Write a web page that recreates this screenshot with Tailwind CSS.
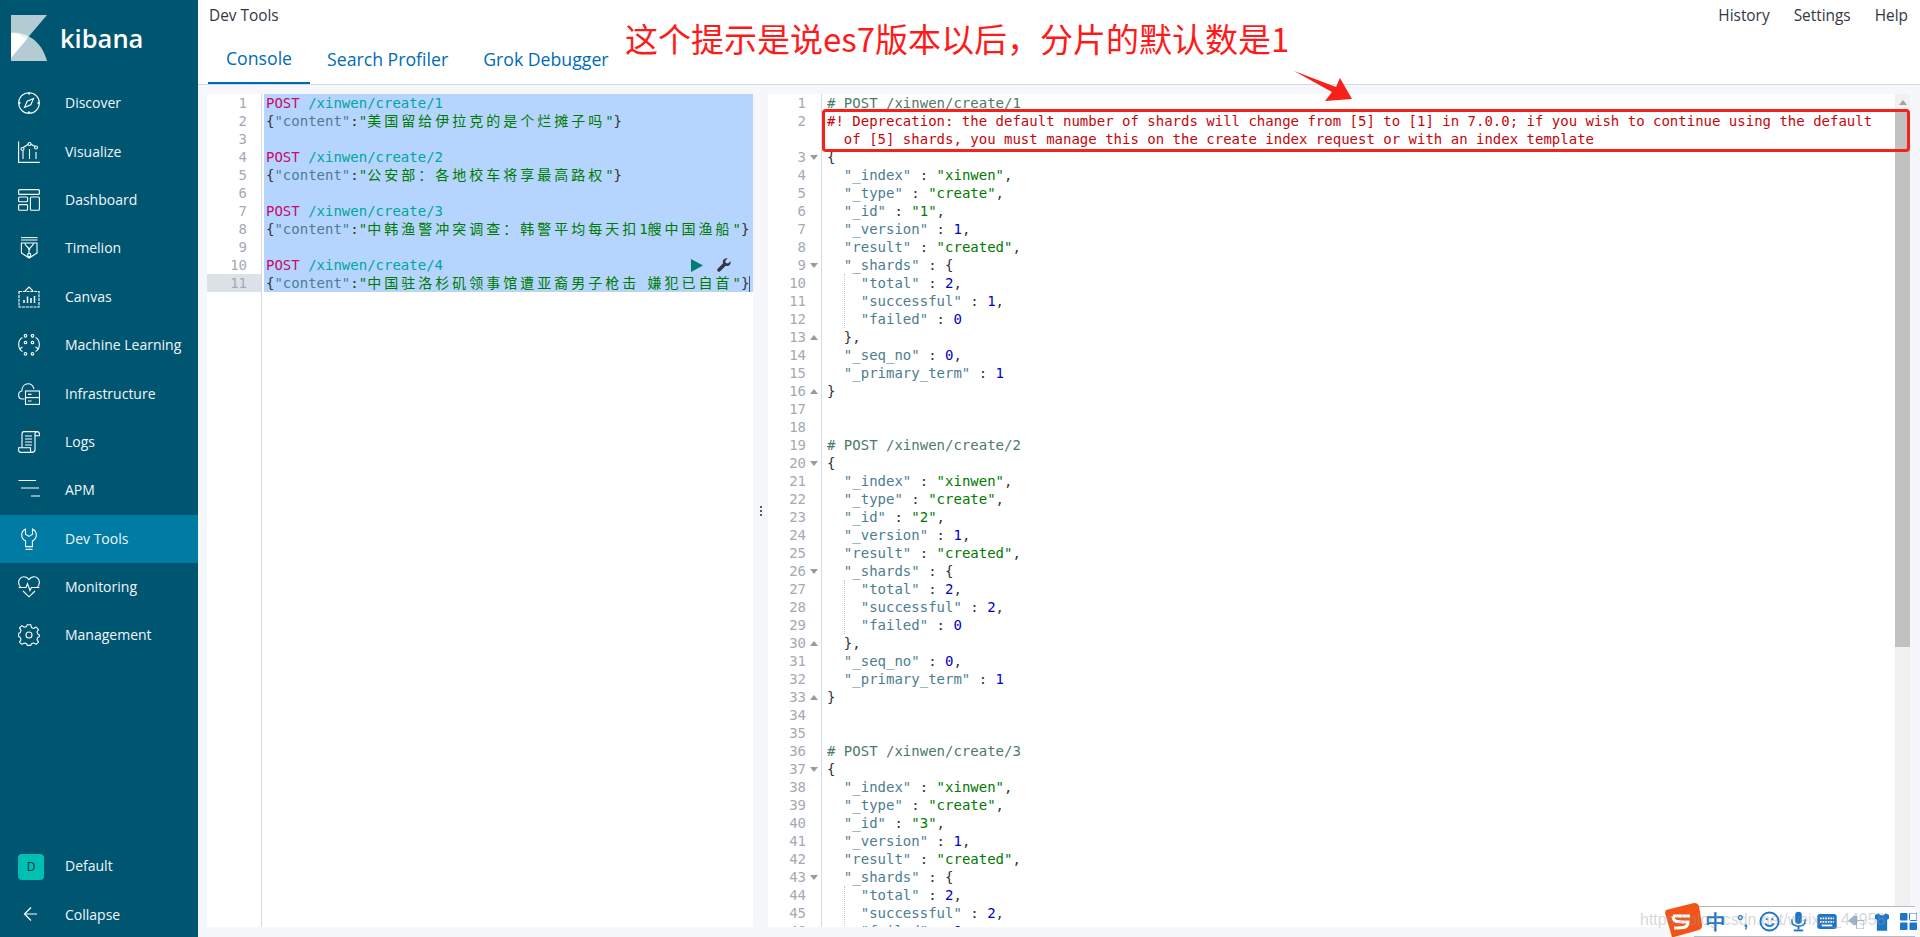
<!DOCTYPE html>
<html lang="zh">
<head>
<meta charset="utf-8">
<title>Dev Tools - Kibana</title>
<script src="https://cdn.jsdelivr.net/npm/@tailwindcss/browser@4"></script>
</head>
<body class="overflow-hidden">
<div class="relative flex h-[937px] w-[1920px] overflow-hidden bg-[#f5f7fa] font-['Open_Sans',sans-serif]">

  <!-- sidebar -->
  <aside class="flex w-[198px] shrink-0 flex-col bg-[#005571] text-[14px] text-[#f0f7fa]">
    <div class="flex h-[79px] items-start pl-[11px] pt-[15px]">
      <svg width="36" height="46" viewBox="0 0 36 46" class="shrink-0">
        <path d="M0 0H36L13 27C10 21 6 18 0 17.5Z" fill="#fff" fill-opacity=".7"/>
        <path d="M0 17.5C14 17 30 24 36 46H0Z" fill="#fff" fill-opacity=".7"/>
        <path d="M0 17.5C6 18 10 21 16 24L0 43Z" fill="#fff"/>
      </svg>
      <span class="ml-[13px] mt-[3px] text-[25.5px] font-semibold leading-[40px] text-white">kibana</span>
    </div>

    <nav class="flex flex-col">
      <a class="flex h-[48.4px] items-center gap-[25px] pl-[18px]">
        <svg class="h-[22px] w-[22px] shrink-0" viewBox="0 0 22 22" fill="none" stroke="#fff" stroke-width="1.1"><circle cx="11" cy="11" r="10.3"/><path d="M15.5 6.5L12.8 12.8L6.5 15.5L9.2 9.2Z"/><path d="M11 .7V2.4M11 19.6V21.3M.7 11H2.4M19.6 11H21.3" stroke-width="2"/></svg>
        <span class="pb-[1px]">Discover</span>
      </a>
      <a class="flex h-[48.4px] items-center gap-[25px] pl-[18px]">
        <svg class="h-[22px] w-[22px] shrink-0" viewBox="0 0 22 22" fill="none" stroke="#fff" stroke-width="1.1"><path d="M.6 .5V21.4H21.8"/><path d="M5 18V10M11.5 18V8M18 18V11"/><path d="M4.5 7L11.5 2.5L18 6"/><circle cx="4.5" cy="8" r="1.5" fill="#005571"/><circle cx="11.5" cy="3" r="1.5" fill="#005571"/><circle cx="18" cy="6.5" r="1.5" fill="#005571"/></svg>
        <span class="pb-[1px]">Visualize</span>
      </a>
      <a class="flex h-[48.4px] items-center gap-[25px] pl-[18px]">
        <svg class="h-[22px] w-[22px] shrink-0" viewBox="0 0 22 22" fill="none" stroke="#fff" stroke-width="1.1"><rect x=".6" y=".6" width="20.8" height="4.8" rx="1"/><rect x=".6" y="8" width="9" height="4.8" rx="1"/><rect x=".6" y="15.6" width="9" height="5.6" rx="1"/><rect x="12.4" y="8" width="9" height="13.2" rx="1"/></svg>
        <span class="pb-[1px]">Dashboard</span>
      </a>
      <a class="flex h-[48.4px] items-center gap-[25px] pl-[18px]">
        <svg class="h-[22px] w-[22px] shrink-0" viewBox="0 0 22 22" fill="none" stroke="#fff" stroke-width="1.1"><path d="M3 .6H19.5M3 3H19.5" stroke-width="1"/><path d="M3.4 6H19V16L11.2 21L3.4 16Z"/><path d="M7 6C7 10 11 9 11 13V16.5M15.5 6C15.5 10 11.4 9 11.4 13" /><circle cx="11.2" cy="18" r="1.6"/></svg>
        <span class="pb-[1px]">Timelion</span>
      </a>
      <a class="flex h-[48.4px] items-center gap-[25px] pl-[18px]">
        <svg class="h-[22px] w-[22px] shrink-0" viewBox="0 0 22 22" fill="none" stroke="#fff" stroke-width="1.1"><path d="M1 5.5H21V21H1Z" stroke-dasharray="3 .8"/><path d="M7 5L11 1L15 5"/><path d="M6 17V14M9.5 17V10.5M13 17V12M16.5 17V10" stroke-width="1.5"/></svg>
        <span class="pb-[1px]">Canvas</span>
      </a>
      <a class="flex h-[48.4px] items-center gap-[25px] pl-[18px]">
        <svg class="h-[22px] w-[22px] shrink-0" viewBox="0 0 22 22" fill="none" stroke="#fff" stroke-width="1.1"><circle cx="7.5" cy="1.8" r="1.3"/><circle cx="14.5" cy="1.8" r="1.3"/><circle cx="7.5" cy="8.5" r="1.3"/><circle cx="14.5" cy="8.5" r="1.3"/><circle cx="7.5" cy="19.8" r="1.3"/><circle cx="14.5" cy="19.8" r="1.3"/><path d="M4.5 3.5C1.5 5 .6 8 .7 11C.8 14 1.5 16 4.5 17.5M17.5 3.5C20.5 5 21.4 8 21.3 11C21.2 14 20.5 16 17.5 17.5"/><path d="M4.5 13L1.5 15M17.5 13L20.5 15" /></svg>
        <span class="pb-[1px]">Machine Learning</span>
      </a>
      <a class="flex h-[48.4px] items-center gap-[25px] pl-[18px]">
        <svg class="h-[22px] w-[22px] shrink-0" viewBox="0 0 22 22" fill="none" stroke="#fff" stroke-width="1.1"><path d="M6.5 16H4.5C2 16 .6 14 .6 12C.6 9.8 2 8.3 3.8 8C4 3.8 6.5 .8 10 .8C13 .8 15.3 3 16 6"/><rect x="7.5" y="8" width="14" height="13.4"/><path d="M7.5 14.6H21.5"/><path d="M10 11.4H13.5M10 18H13.5"/></svg>
        <span class="pb-[1px]">Infrastructure</span>
      </a>
      <a class="flex h-[48.4px] items-center gap-[25px] pl-[18px]">
        <svg class="h-[22px] w-[22px] shrink-0" viewBox="0 0 22 22" fill="none" stroke="#fff" stroke-width="1.1"><path d="M19 .6H6C4.5 .6 4 1.8 4 3V16.5"/><path d="M19 .6C20.5 .6 21.4 1.5 21.4 3V4.8H17V3C17 1.5 17.5 .6 19 .6Z"/><path d="M17 4.8V18.5C17 20.5 16 21.4 14 21.4H3C1.5 21.4 .6 20.5 .6 19V16.8H12.5V19C12.5 20.5 13 21.4 14 21.4"/><path d="M7 5H14M7 8H14M7 11H14M7 14H14"/></svg>
        <span class="pb-[1px]">Logs</span>
      </a>
      <a class="flex h-[48.4px] items-center gap-[25px] pl-[18px]">
        <svg class="h-[22px] w-[22px] shrink-0" viewBox="0 0 22 22" fill="none" stroke="#fff" stroke-width="1.2"><path d="M.5 1.5H18M3 9H21M13 17H22"/></svg>
        <span class="pb-[1px]">APM</span>
      </a>
      <a class="flex h-[48.4px] items-center gap-[25px] bg-[#007ba4] pl-[18px]">
        <svg class="h-[22px] w-[22px] shrink-0" viewBox="0 0 22 22" fill="none" stroke="#fff" stroke-width="1.1"><path d="M7.5 1C5 2.2 3.7 4.5 3.7 7C3.7 9.6 5.2 11.7 7.6 12.9V18.6H14.4V12.9C16.8 11.7 18.3 9.6 18.3 7C18.3 4.5 17 2.2 14.5 1V6.2L11 8.4L7.5 6.2Z"/><path d="M7.5 21.3H14.5"/></svg>
        <span class="pb-[1px]">Dev Tools</span>
      </a>
      <a class="flex h-[48.4px] items-center gap-[25px] pl-[18px]">
        <svg class="h-[22px] w-[22px] shrink-0" viewBox="0 0 22 22" fill="none" stroke="#fff" stroke-width="1.1"><path d="M2.5 11C1.2 9.6 .6 8 .6 6.5C.6 3.2 3 .8 6 .8C8 .8 9.8 1.8 11 3.6C12.2 1.8 14 .8 16 .8C19 .8 21.4 3.2 21.4 6.5C21.4 8 20.8 9.6 19.5 11"/><path d="M.6 11.5H8L9.5 7.5L12 14.5L13.5 11.5H21.4"/><path d="M5 15L11 20.8L17 15"/></svg>
        <span class="pb-[1px]">Monitoring</span>
      </a>
      <a class="flex h-[48.4px] items-center gap-[25px] pl-[18px]">
        <svg class="h-[22px] w-[22px] shrink-0" viewBox="0 0 22 22" fill="none" stroke="#fff" stroke-width="1.1"><circle cx="11" cy="11" r="3"/><path d="M9.2 .7H12.8L13.4 3.5L15.6 4.5L18.1 3L20.5 5.6L19 8L19.8 10L21.4 11V12.6L19.8 13.4L19 15.6L20.5 18.1L18.1 20.3L15.6 19L13.4 19.8L12.8 21.4H9.2L8.6 19.8L6.4 19L3.9 20.3L1.5 18.1L3 15.6L2.2 13.4L.6 12.6V9.4L2.2 8.6L3 6.4L1.5 3.9L3.9 1.7L6.4 3.2L8.6 2.4Z" stroke-linejoin="round"/></svg>
        <span class="pb-[1px]">Management</span>
      </a>
    </nav>

    <div class="mt-auto flex flex-col">
      <a class="flex h-[48px] items-center gap-[21px] pl-[18px]">
        <span class="flex h-[26px] w-[26px] shrink-0 items-center justify-center rounded-[4px] bg-[#00bfb3] text-[12px] text-[#003b36]">D</span>
        <span class="pb-[3px]">Default</span>
      </a>
      <a class="flex h-[46px] items-center gap-[25px] pl-[18px]">
        <svg class="h-[22px] w-[22px] shrink-0" viewBox="0 0 22 22" fill="none" stroke="#fff" stroke-width="1.2"><path d="M19 11H6.5M13 4.5L6.5 11L13 17.5"/></svg>
        <span>Collapse</span>
      </a>
    </div>
  </aside>

  <!-- main -->
  <main class="flex min-w-0 flex-1 flex-col">
    <header class="h-[85px] shrink-0 border-b border-[#d3dae6] bg-white text-[#343741]">
      <div class="flex h-[32px] items-center justify-between pl-[11px] pr-[12px] text-[15.4px]">
        <span>Dev Tools</span>
        <div class="flex gap-[24px]">
          <span>History</span>
          <span>Settings</span>
          <span>Help</span>
        </div>
      </div>
      <div class="ml-[10px] flex h-[52px] items-stretch whitespace-nowrap text-[17.7px] text-[#006bb4]">
        <span class="flex w-[102px] items-center justify-center border-b-2 border-[#006bb4] pt-[3px]">Console</span>
        <span class="flex items-center pl-[17px] pr-[17px] pt-[3px]">Search Profiler</span>
        <span class="flex items-center px-[18px] pt-[3px]">Grok Debugger</span>
      </div>
    </header>

    <div class="flex min-h-0 flex-1 pb-[10px] pl-[9px] pr-[10px] pt-[9px] font-['DejaVu_Sans_Mono','Noto_Sans_CJK_SC',monospace] text-[14px] leading-[18px]">

      <!-- request editor -->
      <section class="flex w-[546px] shrink-0 bg-white">
        <div class="w-[55px] shrink-0 border-r border-[#d3dae6] text-right text-[#a4a9b5]">
          <div class="pr-[14px]">1</div>
          <div class="pr-[14px]">2</div>
          <div class="pr-[14px]">3</div>
          <div class="pr-[14px]">4</div>
          <div class="pr-[14px]">5</div>
          <div class="pr-[14px]">6</div>
          <div class="pr-[14px]">7</div>
          <div class="pr-[14px]">8</div>
          <div class="pr-[14px]">9</div>
          <div class="pr-[14px]">10</div>
          <div class="bg-[#dde1e8] pr-[14px]">11</div>
        </div>
        <div class="ml-[2px] h-[198px] flex-1 overflow-hidden bg-[#b5d5ff] pl-[2px] text-[#333] *:whitespace-pre">
          <div><span class="text-[#c80a68]">POST</span> <span class="text-[#00a69b]">/xinwen/create/1</span></div>
          <div>{<span class="text-[#4d7d8f]">"content"</span>:<span class="text-[#007a00]">"<span class="tracking-[3px]">美国留给伊拉克的是个烂摊子吗</span>"</span>}</div>
          <div>&nbsp;</div>
          <div><span class="text-[#c80a68]">POST</span> <span class="text-[#00a69b]">/xinwen/create/2</span></div>
          <div>{<span class="text-[#4d7d8f]">"content"</span>:<span class="text-[#007a00]">"<span class="tracking-[3px]">公安部：各地校车将享最高路权</span>"</span>}</div>
          <div>&nbsp;</div>
          <div><span class="text-[#c80a68]">POST</span> <span class="text-[#00a69b]">/xinwen/create/3</span></div>
          <div>{<span class="text-[#4d7d8f]">"content"</span>:<span class="text-[#007a00]">"<span class="tracking-[3px]">中韩渔警冲突调查：韩警平均每天扣</span>1<span class="tracking-[3px]">艘中国渔船</span>"</span>}</div>
          <div>&nbsp;</div>
          <div class="relative"><span class="text-[#c80a68]">POST</span> <span class="text-[#00a69b]">/xinwen/create/4</span><svg class="absolute left-[425px] top-[3px] h-[13px] w-[12px]" viewBox="0 0 12 13"><path d="M0 0L12 6.5L0 13Z" fill="#017d73"/></svg><svg class="absolute left-[451px] top-[2px] h-[14px] w-[14px]" viewBox="0 0 14 14"><path d="M13.5 3.2L11 5.6L8.8 5L8.2 2.8L10.6 .4C8.6 -.2 6.6 .8 6 2.6C5.7 3.5 5.8 4.4 6.1 5.2L.7 10.7C0 11.4 0 12.5 .7 13.2C1.4 13.9 2.5 13.9 3.2 13.2L8.7 7.8C10.6 8.5 12.7 7.6 13.4 5.7C13.7 4.9 13.8 4 13.5 3.2Z" fill="#343741"/></svg></div>
          <div>{<span class="text-[#4d7d8f]">"content"</span>:<span class="text-[#007a00]">"<span class="tracking-[3px]">中国驻洛杉矶领事馆遭亚裔男子枪击</span> <span class="tracking-[3px]">嫌犯已自首</span>"</span>}<span class="inline-block h-[16px] w-px bg-[#555] align-middle"></span></div>
        </div>
      </section>

      <!-- resize handle -->
      <div class="flex w-[15px] shrink-0 flex-col items-center justify-center gap-[2px]">
        <span class="h-[2px] w-[2px] bg-[#535966]"></span>
        <span class="h-[2px] w-[2px] bg-[#535966]"></span>
        <span class="h-[2px] w-[2px] bg-[#535966]"></span>
      </div>

      <!-- response editor -->
      <section class="flex min-w-0 flex-1 overflow-hidden bg-white">
        <div class="h-[833px] w-[54px] shrink-0 overflow-hidden border-r border-[#d3dae6] text-right text-[#a4a9b5]">
          <div class="pr-[15px]">1</div>
          <div class="h-[36px] pr-[15px]">2</div>
          <div class="relative pr-[15px]">3<span class="absolute right-[3px] top-[7px] h-0 w-0 border-x-[4px] border-t-[5px] border-x-transparent border-t-[#9a9a9a]"></span></div>
          <div class="pr-[15px]">4</div>
          <div class="pr-[15px]">5</div>
          <div class="pr-[15px]">6</div>
          <div class="pr-[15px]">7</div>
          <div class="pr-[15px]">8</div>
          <div class="relative pr-[15px]">9<span class="absolute right-[3px] top-[7px] h-0 w-0 border-x-[4px] border-t-[5px] border-x-transparent border-t-[#9a9a9a]"></span></div>
          <div class="pr-[15px]">10</div>
          <div class="pr-[15px]">11</div>
          <div class="pr-[15px]">12</div>
          <div class="relative pr-[15px]">13<span class="absolute right-[3px] top-[7px] h-0 w-0 border-x-[4px] border-b-[5px] border-x-transparent border-b-[#9a9a9a]"></span></div>
          <div class="pr-[15px]">14</div>
          <div class="pr-[15px]">15</div>
          <div class="relative pr-[15px]">16<span class="absolute right-[3px] top-[7px] h-0 w-0 border-x-[4px] border-b-[5px] border-x-transparent border-b-[#9a9a9a]"></span></div>
          <div class="pr-[15px]">17</div>
          <div class="pr-[15px]">18</div>
          <div class="pr-[15px]">19</div>
          <div class="relative pr-[15px]">20<span class="absolute right-[3px] top-[7px] h-0 w-0 border-x-[4px] border-t-[5px] border-x-transparent border-t-[#9a9a9a]"></span></div>
          <div class="pr-[15px]">21</div>
          <div class="pr-[15px]">22</div>
          <div class="pr-[15px]">23</div>
          <div class="pr-[15px]">24</div>
          <div class="pr-[15px]">25</div>
          <div class="relative pr-[15px]">26<span class="absolute right-[3px] top-[7px] h-0 w-0 border-x-[4px] border-t-[5px] border-x-transparent border-t-[#9a9a9a]"></span></div>
          <div class="pr-[15px]">27</div>
          <div class="pr-[15px]">28</div>
          <div class="pr-[15px]">29</div>
          <div class="relative pr-[15px]">30<span class="absolute right-[3px] top-[7px] h-0 w-0 border-x-[4px] border-b-[5px] border-x-transparent border-b-[#9a9a9a]"></span></div>
          <div class="pr-[15px]">31</div>
          <div class="pr-[15px]">32</div>
          <div class="relative pr-[15px]">33<span class="absolute right-[3px] top-[7px] h-0 w-0 border-x-[4px] border-b-[5px] border-x-transparent border-b-[#9a9a9a]"></span></div>
          <div class="pr-[15px]">34</div>
          <div class="pr-[15px]">35</div>
          <div class="pr-[15px]">36</div>
          <div class="relative pr-[15px]">37<span class="absolute right-[3px] top-[7px] h-0 w-0 border-x-[4px] border-t-[5px] border-x-transparent border-t-[#9a9a9a]"></span></div>
          <div class="pr-[15px]">38</div>
          <div class="pr-[15px]">39</div>
          <div class="pr-[15px]">40</div>
          <div class="pr-[15px]">41</div>
          <div class="pr-[15px]">42</div>
          <div class="relative pr-[15px]">43<span class="absolute right-[3px] top-[7px] h-0 w-0 border-x-[4px] border-t-[5px] border-x-transparent border-t-[#9a9a9a]"></span></div>
          <div class="pr-[15px]">44</div>
          <div class="pr-[15px]">45</div>
          <div class="pr-[15px]">46</div>
        </div>
        <div class="ml-[5px] h-[833px] min-w-0 flex-1 overflow-hidden text-[#333] *:whitespace-pre">
          <div class="text-[#4d7a6a]"># POST /xinwen/create/1</div>
          <div class="text-[#c5060b]">#! Deprecation: the default number of shards will change from [5] to [1] in 7.0.0; if you wish to continue using the default</div>
          <div class="text-[#c5060b]">  of [5] shards, you must manage this on the create index request or with an index template</div>
          <div>{</div>
          <div>  <span class="text-[#4d7d8f]">"_index"</span> : <span class="text-[#007a00]">"xinwen"</span>,</div>
          <div>  <span class="text-[#4d7d8f]">"_type"</span> : <span class="text-[#007a00]">"create"</span>,</div>
          <div>  <span class="text-[#4d7d8f]">"_id"</span> : <span class="text-[#007a00]">"1"</span>,</div>
          <div>  <span class="text-[#4d7d8f]">"_version"</span> : <span class="text-[#0000cd]">1</span>,</div>
          <div>  <span class="text-[#4d7d8f]">"result"</span> : <span class="text-[#007a00]">"created"</span>,</div>
          <div>  <span class="text-[#4d7d8f]">"_shards"</span> : {</div>
          <div class="ml-[16.86px] border-l border-dotted border-[#c8c8c8] pl-[15.86px] whitespace-normal! *:whitespace-pre">
            <div><span class="text-[#4d7d8f]">"total"</span> : <span class="text-[#0000cd]">2</span>,</div>
            <div><span class="text-[#4d7d8f]">"successful"</span> : <span class="text-[#0000cd]">1</span>,</div>
            <div><span class="text-[#4d7d8f]">"failed"</span> : <span class="text-[#0000cd]">0</span></div>
          </div>
          <div>  },</div>
          <div>  <span class="text-[#4d7d8f]">"_seq_no"</span> : <span class="text-[#0000cd]">0</span>,</div>
          <div>  <span class="text-[#4d7d8f]">"_primary_term"</span> : <span class="text-[#0000cd]">1</span></div>
          <div>}</div>
          <div>&nbsp;</div>
          <div>&nbsp;</div>
          <div class="text-[#4d7a6a]"># POST /xinwen/create/2</div>
          <div>{</div>
          <div>  <span class="text-[#4d7d8f]">"_index"</span> : <span class="text-[#007a00]">"xinwen"</span>,</div>
          <div>  <span class="text-[#4d7d8f]">"_type"</span> : <span class="text-[#007a00]">"create"</span>,</div>
          <div>  <span class="text-[#4d7d8f]">"_id"</span> : <span class="text-[#007a00]">"2"</span>,</div>
          <div>  <span class="text-[#4d7d8f]">"_version"</span> : <span class="text-[#0000cd]">1</span>,</div>
          <div>  <span class="text-[#4d7d8f]">"result"</span> : <span class="text-[#007a00]">"created"</span>,</div>
          <div>  <span class="text-[#4d7d8f]">"_shards"</span> : {</div>
          <div class="ml-[16.86px] border-l border-dotted border-[#c8c8c8] pl-[15.86px] whitespace-normal! *:whitespace-pre">
            <div><span class="text-[#4d7d8f]">"total"</span> : <span class="text-[#0000cd]">2</span>,</div>
            <div><span class="text-[#4d7d8f]">"successful"</span> : <span class="text-[#0000cd]">2</span>,</div>
            <div><span class="text-[#4d7d8f]">"failed"</span> : <span class="text-[#0000cd]">0</span></div>
          </div>
          <div>  },</div>
          <div>  <span class="text-[#4d7d8f]">"_seq_no"</span> : <span class="text-[#0000cd]">0</span>,</div>
          <div>  <span class="text-[#4d7d8f]">"_primary_term"</span> : <span class="text-[#0000cd]">1</span></div>
          <div>}</div>
          <div>&nbsp;</div>
          <div>&nbsp;</div>
          <div class="text-[#4d7a6a]"># POST /xinwen/create/3</div>
          <div>{</div>
          <div>  <span class="text-[#4d7d8f]">"_index"</span> : <span class="text-[#007a00]">"xinwen"</span>,</div>
          <div>  <span class="text-[#4d7d8f]">"_type"</span> : <span class="text-[#007a00]">"create"</span>,</div>
          <div>  <span class="text-[#4d7d8f]">"_id"</span> : <span class="text-[#007a00]">"3"</span>,</div>
          <div>  <span class="text-[#4d7d8f]">"_version"</span> : <span class="text-[#0000cd]">1</span>,</div>
          <div>  <span class="text-[#4d7d8f]">"result"</span> : <span class="text-[#007a00]">"created"</span>,</div>
          <div>  <span class="text-[#4d7d8f]">"_shards"</span> : {</div>
          <div class="ml-[16.86px] border-l border-dotted border-[#c8c8c8] pl-[15.86px] whitespace-normal! *:whitespace-pre">
            <div><span class="text-[#4d7d8f]">"total"</span> : <span class="text-[#0000cd]">2</span>,</div>
            <div><span class="text-[#4d7d8f]">"successful"</span> : <span class="text-[#0000cd]">2</span>,</div>
            <div><span class="text-[#4d7d8f]">"failed"</span> : <span class="text-[#0000cd]">0</span></div>
          </div>
        </div>
        <div class="w-[15px] shrink-0 bg-[#f1f1f1]">
          <div class="flex h-[17px] items-center justify-center"><span class="h-0 w-0 border-x-[4px] border-b-[5px] border-x-transparent border-b-[#a3a3a3]"></span></div>
          <div class="h-[536px] bg-[#c1c1c1]"></div>
        </div>
      </section>
    </div>
  </main>

  <!-- annotation -->
  <div class="absolute left-[625px] top-[16px] whitespace-nowrap font-['Noto_Sans_CJK_SC',sans-serif] text-[33px] leading-[44px] text-[#ff1a1a]">这个提示是说es7版本以后，分片的默认数是1</div>
  <svg class="absolute left-[1292px] top-[68px]" width="62" height="34" viewBox="0 0 62 34"><path d="M2 3L44 19L48 10L60 31L33 33L40 24Z" fill="#f5221b"/></svg>
  <div class="absolute left-[822px] top-[109px] h-[43px] w-[1088px] rounded-[4px] border-[3px] border-[#f5221b]"></div>

  <!-- IME toolbar -->
  <div class="absolute left-[1694px] top-[906px] flex h-[31px] w-[221px] items-center gap-[11px] border-y border-[#b9b9c4] bg-white pl-[12px] font-['Liberation_Sans',sans-serif] text-[#1c75c9]">
    <span class="text-[20px] font-bold leading-none">中</span>
    <span class="w-[12px] text-[16px] font-bold leading-none">°,</span>
    <svg class="h-[21px] w-[21px] shrink-0" viewBox="0 0 22 22" fill="none" stroke="#1c75c9" stroke-width="2"><circle cx="11" cy="11" r="9.5"/><path d="M6.5 13C8 16.5 14 16.5 15.5 13"/><path d="M8 7.5V9.5M14 7.5V9.5"/></svg>
    <svg class="h-[22px] w-[15px] shrink-0" viewBox="0 0 16 22" fill="#1c75c9"><rect x="4.5" y="0" width="7" height="13" rx="3.5"/><path d="M1 8V10C1 13.5 4 15.5 8 15.5C12 15.5 15 13.5 15 10V8" fill="none" stroke="#1c75c9" stroke-width="1.6"/><rect x="7" y="15" width="2" height="4"/><rect x="3" y="19" width="10" height="2"/></svg>
    <svg class="h-[15px] w-[20px] shrink-0" viewBox="0 0 22 17"><rect width="22" height="17" rx="3" fill="#1c75c9"/><path d="M3 5H19M3 9H19" stroke="#fff" stroke-width="2" stroke-dasharray="2 1"/><path d="M5 13H17" stroke="#fff" stroke-width="2"/></svg>
    <svg class="h-[14px] w-[16px] shrink-0" viewBox="0 0 17 15"><path d="M0 6L6 1H10V11H6Z" fill="#9db7d6"/><rect x="9" y="6" width="8" height="9" fill="#fff" stroke="#9db7d6"/></svg>
    <svg class="h-[18px] w-[14px] shrink-0" viewBox="0 0 15 19"><path d="M0 2L4 0C5 3 10 3 11 0L15 2V6L13 7V19H2V7L0 6Z" fill="#1c75c9"/></svg>
    <svg class="h-[17px] w-[17px] shrink-0" viewBox="0 0 17 17" fill="#1c75c9"><rect width="7.5" height="7.5" rx="1"/><rect x="9.5" y="0" width="7.5" height="7.5" rx="1" fill="none" stroke="#1c75c9"/><rect y="9.5" width="7.5" height="7.5" rx="1"/><rect x="9.5" y="9.5" width="7.5" height="7.5" rx="1"/></svg>
  </div>
  <svg class="absolute left-[1664px] top-[903px]" width="38" height="34" viewBox="0 0 38 34"><path d="M2 7L30 0C33 0 34 1 35 3L38 22C38 25 37 26 35 27L10 34H8L1 10Z" fill="#f35316"/><path d="M9 13H26M9 13C9 19 12 19 24 19C24 25 20 25 10 25" fill="none" stroke="#fff" stroke-width="3"/></svg>
  <div class="pointer-events-none absolute left-[1640px] top-[908px] whitespace-nowrap font-['Liberation_Sans',sans-serif] text-[16px] leading-[24px] text-[#9a9a9a]/40">https://blog.csdn.net/weixin_44958</div>
</div>
</body>
</html>
